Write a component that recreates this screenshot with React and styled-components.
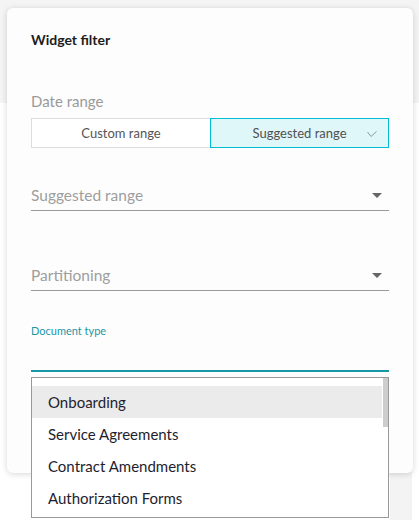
import React from "react";
import styled, { createGlobalStyle } from "styled-components";

const GlobalStyle = createGlobalStyle`
  html, body {
    margin: 0;
    padding: 0;
    background: #ffffff;
    font-family: "Lato", "Liberation Sans", sans-serif;
  }
  * {
    box-sizing: border-box;
  }
`;

const documentTypes = [
  "Onboarding",
  "Service Agreements",
  "Contract Amendments",
  "Authorization Forms",
];

const Caret = () => (
  <CaretSvg width="10" height="5" viewBox="0 0 10 5">
    <path d="M0 0 L10 0 L5 5 Z" fill="#666" />
  </CaretSvg>
);

const Check = () => (
  <CheckSvg width="10" height="7" viewBox="0 0 10 7">
    <polyline points="0.5,1 4,5.5 9.5,0.5" fill="none" stroke="#8a9aa0" strokeWidth="1" />
  </CheckSvg>
);

export default function App() {
  return (
    <>
      <GlobalStyle />
      <Backdrop>
        <TopBar />
        <PageBody>
          <PageMain />
          <SideRail />
        </PageBody>
      </Backdrop>

      <Modal>
        <Title>Widget filter</Title>

        <SectionLabel>Date range</SectionLabel>
        <Toggle>
          <ToggleOption>Custom range</ToggleOption>
          <ToggleOption active>
            Suggested range
            <Check />
          </ToggleOption>
        </Toggle>

        <SelectField top={34}>
          <Placeholder>Suggested range</Placeholder>
          <Caret />
        </SelectField>

        <SelectField top={51}>
          <Placeholder>Partitioning</Placeholder>
          <Caret />
        </SelectField>

        <FocusedField>
          <FloatLabel>Document type</FloatLabel>
          <Menu>
            {documentTypes.map((t, i) => (
              <MenuItem key={t} highlighted={i === 0}>
                {t}
              </MenuItem>
            ))}
            <ScrollThumb />
          </Menu>
        </FocusedField>
      </Modal>
    </>
  );
}

const Backdrop = styled.div`
  height: 520px;
  display: flex;
  flex-direction: column;
  background: #ffffff;
`;

const TopBar = styled.div`
  height: 103px;
  background: #f4f4f4;
`;

const PageBody = styled.div`
  flex: 1;
  display: flex;
  padding-right: 7px;
`;

const PageMain = styled.div`
  flex: 1;
`;

const SideRail = styled.div`
  width: 22px;
  background: #f3f3f3;
`;

const Modal = styled.div`
  position: absolute;
  top: 8px;
  left: 7px;
  width: 406px;
  height: 465px;
  padding: 22px 24px 0;
  background: #fdfdfd;
  border-radius: 6px;
  box-shadow: 0 1px 6px rgba(0, 0, 0, 0.16);
`;

const Title = styled.h2`
  margin: 0;
  font-size: 14px;
  line-height: 20px;
  font-weight: 700;
  color: #1c1c1c;
`;

const SectionLabel = styled.div`
  margin-top: 41px;
  font-size: 15px;
  line-height: 20px;
  color: #9a9a9a;
`;

const Toggle = styled.div`
  margin-top: 7px;
  display: grid;
  grid-template-columns: 1fr 1fr;
  height: 30px;
`;

const ToggleOption = styled.div`
  position: relative;
  display: flex;
  align-items: center;
  justify-content: center;
  font-size: 13px;
  color: ${(p) => (p.active ? "#505050" : "#555")};
  background: ${(p) => (p.active ? "#e0f7fa" : "#fff")};
  border: 1px solid ${(p) => (p.active ? "#00bcd4" : "#dddddd")};
  border-right-width: ${(p) => (p.active ? "1px" : "0")};
`;

const CheckSvg = styled.svg`
  position: absolute;
  right: 11px;
  top: 12px;
`;

const SelectField = styled.div`
  margin-top: ${(p) => p.top}px;
  height: 29px;
  display: flex;
  align-items: center;
  justify-content: space-between;
  padding: 0 7px 2px 0;
  border-bottom: 1px solid #9a9a9a;
`;

const Placeholder = styled.span`
  font-size: 15.5px;
  color: #9e9e9e;
`;

const CaretSvg = styled.svg`
  display: block;
`;

const FocusedField = styled.div`
  position: relative;
  margin-top: 33px;
  height: 48px;
  border-bottom: 2px solid #1698a6;
`;

const FloatLabel = styled.div`
  font-size: 11px;
  line-height: 14px;
  color: #1a98a6;
`;

const Menu = styled.div`
  position: absolute;
  top: 53px;
  left: 0;
  right: 0;
  height: 141px;
  padding: 8px 6px 0 0;
  background: #ffffff;
  border: 1px solid #999999;
  overflow: hidden;
`;

const ScrollThumb = styled.div`
  position: absolute;
  top: 0;
  right: 0;
  width: 5px;
  height: 49px;
  background: #cdcdcd;
`;

const MenuItem = styled.div`
  height: 32px;
  display: flex;
  align-items: center;
  padding-left: 16px;
  font-size: 15px;
  color: #1e1e2e;
  background: ${(p) => (p.highlighted ? "#ebebeb" : "transparent")};
`;
